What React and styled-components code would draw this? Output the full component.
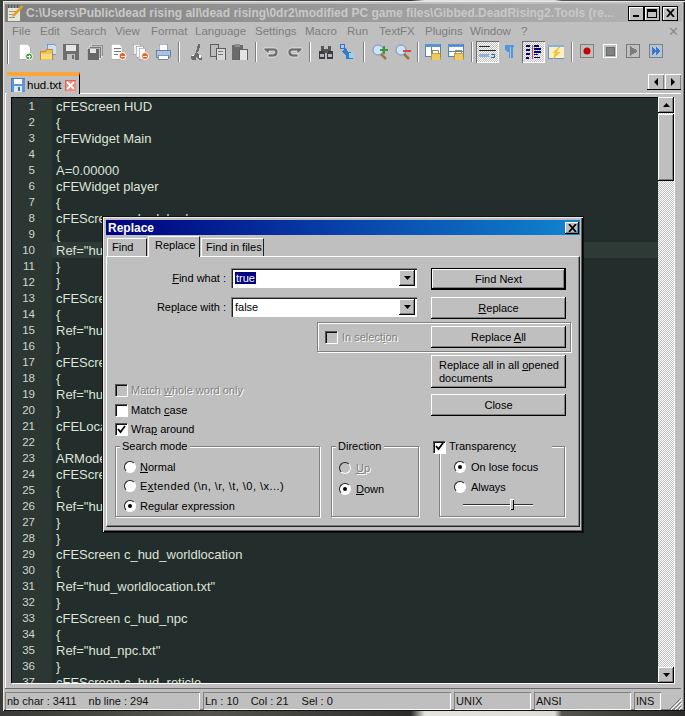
import React from "react";
import styled, { createGlobalStyle, css } from "styled-components";

const FACE = "#bfbfbf";
const UI_FONT = `"Liberation Sans", Arial, sans-serif`;

const GlobalStyle = createGlobalStyle`
  html, body { margin: 0; padding: 0; }
  body {
    width: 685px;
    height: 716px;
    overflow: hidden;
    background: linear-gradient(90deg, #3a3a36 0, #55554e 30%, #2c2c2a 60%, #e4e4dc 62%, #dcdcd4 81%, #55554e 82%, #2b2b28 100%);
    font-family: ${UI_FONT};
    font-size: 11px;
  }
`;

const raised = css`
  background: ${FACE};
  box-shadow: inset -1px -1px 0 #000, inset 1px 1px 0 #fff, inset -2px -2px 0 #808080;
`;

const sunken = css`
  box-shadow: inset 1px 1px 0 #808080, inset 2px 2px 0 #202020, inset -1px -1px 0 #fff;
`;

const Page = styled.div`
  position: relative;
  width: 685px;
  height: 716px;
  overflow: hidden;
`;

const Win = styled.div`
  margin-left: 3px;
  margin-top: 1px;
  width: 682px;
  height: 710px;
  box-sizing: border-box;
  padding: 3px 4px 1px 2px;
  background: ${FACE};
  box-shadow: inset 1px 1px 0 #e8e8e8, inset -1px -1px 0 #101010, inset -2px -2px 0 #808080;
  display: flex;
  flex-direction: column;
`;

const TitleBar = styled.div`
  height: 18px;
  flex: none;
  display: flex;
  align-items: center;
  padding-left: 2px;
  margin-right: -1px;
  background: linear-gradient(90deg, #808080, #b4b4b4);
`;

const TitleText = styled.span`
  margin-left: 3px;
  width: 599px;
  flex: none;
  white-space: nowrap;
  overflow: hidden;
  font: bold 12px ${UI_FONT};
  color: #c8c8c8;
`;

const WinButtons = styled.div`
  display: flex;
  margin-left: 3px;
`;

const WinButton = styled.div`
  ${raised}
  width: 16px;
  height: 15px;
  margin-left: ${(p) => p.$gap || 0}px;
  display: flex;
  align-items: center;
  justify-content: center;
  box-shadow: inset 0 0 0 1px #000, inset 2px 2px 0 #fff;
`;

const MenuBar = styled.div`
  height: 18px;
  flex: none;
  display: flex;
  align-items: center;
  padding-left: 7px;
`;

const MenuItem = styled.span`
  width: ${(p) => p.$w}px;
  flex: none;
  color: #7d7d7d;
  font-size: 11.5px;
`;

const MenuClose = styled.span`
  margin-left: auto;
  margin-right: 2px;
  color: #8a8a8a;
  font-size: 13px;
`;

const ToolBar = styled.div`
  height: 24px;
  flex: none;
  display: flex;
  align-items: center;
  padding-left: 1px;
`;

const Grip = styled.div`
  width: 1px;
  height: 24px;
  flex: none;
  margin-left: 1px;
  margin-right: 9px;
  background: #6f6f6f;
  box-shadow: 1px 0 0 #fff;
`;

const ToolSep = styled.div`
  width: 1px;
  height: 20px;
  flex: none;
  margin: 0 ${(p) => p.$r ?? 7}px 0 ${(p) => p.$l ?? 7}px;
  background: #fff;
  box-shadow: -1px 0 0 #7f7f7f;
`;

const ToolIcon = styled.div`
  width: ${(p) => p.$w ?? 16}px;
  height: 16px;
  flex: none;
  margin-right: ${(p) => p.$gap ?? 7}px;
  svg { display: block; }
`;

const ActiveTool = styled.div`
  width: 23px;
  height: 22px;
  flex: none;
  margin-right: ${(p) => p.$gap ?? 6}px;
  display: flex;
  align-items: center;
  justify-content: center;
  background: repeating-conic-gradient(#fff 0 25%, #bfbfbf 0 50%) 0 0 / 2px 2px;
  box-shadow: inset 1px 1px 0 #707070, inset -1px -1px 0 #fff;
`;

const TabStrip = styled.div`
  height: 29px;
  flex: none;
  box-sizing: content-box;
  display: flex;
  align-items: flex-end;
  padding-left: 2px;
  border-bottom: 1px solid #fff;
  margin-bottom: -1px;
`;

const DocTab = styled.div`
  width: 73px;
  height: 22px;
  box-sizing: border-box;
  border-top: 4px solid #fba63a;
  border-right: 1px solid #000;
  background: ${FACE};
  display: flex;
  align-items: center;
  padding-left: 4px;
  margin-bottom: -1px;
  font-size: 11.5px;
  color: #000;
  position: relative;
`;

const DocName = styled.span`
  margin-left: 2px;
  width: 38px;
  flex: none;
`;

const TabArrows = styled.div`
  margin-left: auto;
  margin-right: 0;
  margin-bottom: 3px;
  display: flex;
  border-bottom: 1px solid #000;
`;

const ArrowBtn = styled.div`
  width: 16px;
  height: 15px;
  margin-left: 1px;
  display: flex;
  align-items: center;
  justify-content: center;
  background: ${FACE};
  box-shadow: inset 1px 1px 0 #fff, inset -1px 0 0 #808080;
`;

const EditorFrame = styled.div`
  flex: 1;
  min-height: 0;
  padding: 4px 7px 5px 6px;
  border-bottom: 1px solid #6a6a6a;
  box-shadow: inset 1px 0 0 #fff;
  display: flex;
`;

const EditorInner = styled.div`
  flex: 1;
  min-width: 0;
  display: flex;
  box-shadow: 1px 1px 0 #fff;
`;

const Editor = styled.div`
  flex: 1;
  min-width: 0;
  background: #232d2b;
  overflow: hidden;
  box-shadow: inset 1px 1px 0 #000;
  padding: 1px 0 0 1px;
`;

const Line = styled.div`
  height: 16px;
  display: flex;
  align-items: center;
  background: ${(p) => (p.$current ? "#2d3a36" : "transparent")};
`;

const LineNumber = styled.div`
  width: 40px;
  height: 16px;
  flex: none;
  box-sizing: border-box;
  padding-right: 17px;
  text-align: right;
  line-height: 16px;
  font-size: 11.5px;
  color: #d0d6cc;
  background: #2c3633;
`;

const LineText = styled.div`
  margin-left: 4px;
  font-size: 13px;
  color: #dde3d8;
  white-space: pre;
`;

const ScrollBar = styled.div`
  width: 16px;
  flex: none;
  display: flex;
  flex-direction: column;
  background: repeating-conic-gradient(#fff 0 25%, #bfbfbf 0 50%) 0 0 / 2px 2px;
`;

const ScrollBtn = styled.div`
  ${raised}
  height: 16px;
  flex: none;
  display: flex;
  align-items: center;
  justify-content: center;
`;

const ScrollThumb = styled.div`
  ${raised}
  height: 67px;
  flex: none;
  margin-top: 1px;
`;

const ScrollFill = styled.div`
  flex: 1;
`;

const StatusBar = styled.div`
  height: 18px;
  flex: none;
  display: flex;
  margin-top: 3px;
  gap: 3px;
`;

const StatusCell = styled.div`
  width: ${(p) => p.$w}px;
  flex: none;
  box-sizing: border-box;
  box-shadow: inset 1px 1px 0 #808080, inset -1px -1px 0 #fff;
  display: flex;
  align-items: center;
  padding-left: 2px;
  font-size: 11px;
  color: #111;
  white-space: pre;
`;

const StatusPart = styled.span`
  margin-right: ${(p) => p.$gap}px;
`;

const ResizeGrip = styled.div`
  margin-left: 4px;
  width: 15px;
  align-self: flex-end;
  svg { display: block; }
`;

/* Replace dialog, floats over the editor */
const Dialog = styled.div`
  position: absolute;
  left: 103px;
  top: 217px;
  width: 480px;
  height: 315px;
  box-sizing: border-box;
  padding: 3px 3px 5px;
  background: ${FACE};
  box-shadow: inset 1px 1px 0 #e8e8e8, inset -1px -1px 0 #000, inset -2px -2px 0 #606060, 0 0 0 1px #111;
  color: #000;
  display: flex;
  flex-direction: column;
`;

const DialogTitle = styled.div`
  height: 15px;
  flex: none;
  display: flex;
  align-items: center;
  justify-content: space-between;
  padding: 0 1px 0 2px;
  background: linear-gradient(90deg, #000080, #1084d0);
  color: #fff;
  font: bold 12px ${UI_FONT};
`;

const DialogClose = styled.div`
  ${raised}
  width: 14px;
  height: 12px;
  display: flex;
  align-items: center;
  justify-content: center;
`;

const Tabs = styled.div`
  height: 20px;
  margin-top: 1px;
  flex: none;
  display: flex;
  align-items: flex-end;
  padding-left: 1px;
  gap: 1px;
`;

const Tab = styled.div`
  width: ${(p) => p.$w}px;
  height: ${(p) => (p.$active ? 21 : 18)}px;
  box-sizing: border-box;
  background: ${FACE};
  border-top: 1px solid #fff;
  border-left: 1px solid #fff;
  border-right: 1px solid #202020;
  padding: ${(p) => (p.$active ? "2px 0 0 6px" : "2px 0 0 4px")};
  font-size: 11px;
  margin-bottom: ${(p) => (p.$active ? -1 : 0)}px;
  position: relative;
  z-index: ${(p) => (p.$active ? 1 : 0)};
`;

const TabPanel = styled.div`
  flex: 1;
  box-sizing: border-box;
  border-top: 1px solid #fff;
  border-left: 1px solid #fff;
  border-right: 1px solid #202020;
  border-bottom: 1px solid #202020;
  box-shadow: inset -1px -1px 0 #808080;
  padding-top: 11px;
  display: flex;
  flex-direction: column;
`;

const FieldRow = styled.div`
  display: grid;
  grid-template-columns: 119px 205px 135px;
  margin-bottom: 7px;
  align-items: start;
`;

const FieldLabel = styled.label`
  text-align: right;
  line-height: 20px;
  font-size: 11px;
`;

const Combo = styled.div`
  ${sunken}
  width: 186px;
  height: 20px;
  margin-left: 5px;
  box-sizing: border-box;
  background: #fff;
  display: flex;
  align-items: center;
  justify-content: space-between;
  padding: 2px 2px 2px 4px;
  font-size: 11px;
`;

const Selected = styled.span`
  background: #000080;
  color: #fff;
  padding: 0 1px;
`;

const ComboArrow = styled.div`
  ${raised}
  width: 16px;
  height: 16px;
  display: flex;
  align-items: center;
  justify-content: center;
`;

const Button = styled.div`
  ${raised}
  width: 135px;
  height: ${(p) => p.$h || 22}px;
  box-sizing: border-box;
  flex: none;
  display: flex;
  align-items: center;
  justify-content: center;
  font-size: 11px;
  line-height: 13px;
  ${(p) =>
    p.$default &&
    css`
      box-shadow: inset 0 0 0 1px #000, inset -2px -2px 0 #000, inset 2px 2px 0 #fff, inset -3px -3px 0 #808080;
    `}
  ${(p) =>
    p.$wrap &&
    css`
      justify-content: flex-start;
      padding-left: 8px;
    `}
`;

const SelectionBox = styled.div`
  width: 254px;
  height: 30px;
  margin: -4px 0 3px 210px;
  box-sizing: border-box;
  border: 1px solid #808080;
  box-shadow: 1px 1px 0 #fff, inset 1px 1px 0 #fff;
  display: flex;
  align-items: center;
  padding-left: 7px;
  justify-content: space-between;
  padding-right: 4px;
`;

const LowerBlock = styled.div`
  display: flex;
  justify-content: space-between;
  height: 84px;
  padding-left: 8px;
  padding-right: 13px;
`;

const CheckColumn = styled.div`
  display: flex;
  flex-direction: column;
  justify-content: flex-end;
`;

const ButtonColumn = styled.div`
  display: flex;
  flex-direction: column;
  gap: 6px;
`;

const OptionRow = styled.div`
  display: flex;
  align-items: center;
  height: ${(p) => p.$h || 19.5}px;
  gap: ${(p) => p.$gap ?? 4}px;
  font-size: 11px;
  white-space: nowrap;
  color: ${(p) => (p.$off ? "#808080" : "#000")};
  text-shadow: ${(p) => (p.$off ? "1px 1px 0 #fff" : "none")};
`;

const WideLabel = styled.span`
  letter-spacing: 0.45px;
`;

const Check = styled.span`
  width: 12px;
  height: 12px;
  flex: none;
  background: ${(p) => (p.$off ? FACE : "#fff")};
  box-shadow: inset 1px 1px 0 #555, inset 2px 2px 0 #101010, 1px 1px 0 #fff;
  display: flex;
  align-items: center;
  justify-content: center;
  text-shadow: none;
`;

const Radio = styled.span`
  width: 12px;
  height: 12px;
  flex: none;
  border-radius: 50%;
  box-sizing: border-box;
  background: ${(p) => (p.$off ? FACE : "#fff")};
  border: 1px solid;
  border-color: #202020 #fff #fff #202020;
  display: flex;
  align-items: center;
  justify-content: center;
  &::after {
    content: "";
    display: ${(p) => (p.$on ? "block" : "none")};
    width: 4px;
    height: 4px;
    border-radius: 50%;
    background: #000;
  }
`;

const GroupRow = styled.div`
  display: flex;
  margin-top: 1px;
  margin-left: 8px;
`;

const Group = styled.fieldset`
  width: ${(p) => p.$w}px;
  height: 77px;
  flex: none;
  box-sizing: border-box;
  margin: 0 0 0 ${(p) => p.$left || 0}px;
  padding: 4px 0 0 ${(p) => p.$pad}px;
  min-width: 0;
  border: 1px solid #808080;
  box-shadow: 1px 1px 0 #fff, inset 1px 1px 0 #fff;
`;

const Legend = styled.legend`
  padding: 0 3px 0 2px;
  margin-left: ${(p) => 4 - p.$pad}px;
  font-size: 11px;
  line-height: 13px;
  background: ${FACE};
  position: relative;
`;

const CheckLegend = styled.legend`
  display: flex;
  align-items: center;
  gap: 4px;
  width: 119px;
  margin-left: ${(p) => -7 - p.$pad}px;
  padding: 0;
  font-size: 11px;
  line-height: 13px;
  background: ${FACE};
  position: relative;
`;

const Slider = styled.div`
  width: 70px;
  height: 12px;
  margin: 2px 0 0 9px;
  position: relative;
  &::before {
    content: "";
    position: absolute;
    left: 0;
    right: 0;
    top: 5px;
    height: 1px;
    background: #303030;
    box-shadow: 0 1px 0 #fff;
  }
`;

const SliderThumb = styled.div`
  position: absolute;
  left: 47px;
  top: 0;
  width: 4px;
  height: 11px;
  background: ${FACE};
  box-shadow: inset 1px 1px 0 #fff, inset -1px -1px 0 #000;
`;

/* ---- icons ---- */
const Svg = ({ children, w = 16, h = 16 }) => (
  <svg width={w} height={h} viewBox={`0 0 ${w} ${h}`} shapeRendering="crispEdges">
    {children}
  </svg>
);

const Page16 = ({ x = 2 }) => (
  <path d={`M${x} 0h8l3 3v12h-11z`} fill="#fff" stroke="#a8a8a8" strokeWidth=".6" />
);

const NewIcon = () => (
  <Svg>
    <Page16 />
    <circle cx="12" cy="12.5" r="3.5" fill="#3f9d3f" stroke="#fff" shapeRendering="auto" />
    <path d="M10 12h4v1h-4zM11.500 10.500h1v4h-1z" fill="#fff" />
  </Svg>
);

const OpenIcon = () => (
  <Svg>
    <path d="M7 0h7l2 2v8H7z" fill="#cfe0f4" stroke="#4f7fc0" strokeWidth=".7" />
    <path d="M0 7h6l1-2h5v11H0z" fill="#f4c04e" stroke="#a87a20" strokeWidth=".7" />
    <path d="M1 10h11v5H1z" fill="#fbdc80" />
  </Svg>
);

const SaveIcon = ({ color = "#6e6e6e", face = "#e6e6e6" }) => (
  <Svg>
    <path d="M0 0h15l1 1v15H0z" fill={color} />
    <path d="M3 1h10v6H3z" fill={face} />
    <path d="M4 10h8v6H4z" fill={FACE} />
    <path d="M9 11h2v4H9z" fill={color} />
  </Svg>
);

const SaveAllIcon = () => (
  <Svg>
    <path d="M4 0h12v12H4z" fill="#8d8d8d" stroke="#fff" strokeWidth=".5" />
    <path d="M2 2h12v12H2z" fill="#7a7a7a" stroke="#fff" strokeWidth=".5" />
    <path d="M0 4h12v12H0z" fill="#666" stroke="#fff" strokeWidth=".5" />
    <path d="M3 5h6v4H3z" fill="#e4e4e4" />
  </Svg>
);

const CloseDocIcon = () => (
  <Svg>
    <Page16 x={0} />
    <path d="M3 4h7v1H3zM3 7h7v1H3zM3 10h4v1H3z" fill="#777" />
    <circle cx="11.500" cy="12" r="3.500" fill="#e8612a" stroke="#fff" shapeRendering="auto" />
    <path d="M9.500 11.500h4v1h-4z" fill="#fff" />
  </Svg>
);

const CloseAllIcon = () => (
  <Svg>
    <path d="M0 0h7v10H0z" fill="#eee" stroke="#999" strokeWidth=".6" />
    <path d="M3 2h7v11H3z" fill="#f8f8f8" stroke="#999" strokeWidth=".6" />
    <path d="M6 4h6v11H6z" fill="#fff" stroke="#999" strokeWidth=".6" />
    <circle cx="12" cy="12" r="3.500" fill="#e8612a" stroke="#fff" shapeRendering="auto" />
    <path d="M10 11.500h4v1h-4z" fill="#fff" />
  </Svg>
);

const PrintIcon = () => (
  <Svg>
    <path d="M4 0h8v6H4z" fill="#fff" stroke="#7f95b5" strokeWidth=".7" />
    <path d="M1 6h14v7H1z" fill="#a9c3e4" stroke="#56719a" strokeWidth=".8" />
    <path d="M3 11h10v4H3z" fill="#fff" stroke="#56719a" strokeWidth=".7" />
  </Svg>
);

const CutIcon = () => (
  <Svg>
    <path d="M10 0h2v3l-2 5H8zM5 16h3v-3l3 3h3v-3l-3-2-2-3H8l-1 3-2 1H3v3z" fill="#6a6a6a" />
    <path d="M3 11h3v1H4zM11 11h2v3h-2z" fill="#fff" />
  </Svg>
);

const CopyIcon = () => (
  <Svg>
    <path d="M0 0h8v12H0z" fill="#bcbcbc" stroke="#5e5e5e" />
    <path d="M6 4h9v12H6z" fill="#d8d8d8" stroke="#5e5e5e" />
    <path d="M8 7h5v1H8zM8 10h5v1H8z" fill="#777" />
  </Svg>
);

const PasteIcon = () => (
  <Svg>
    <path d="M0 1h11v15H0z" fill="#6b6b6b" />
    <path d="M3 0h5v3H3z" fill="#8d8d8d" />
    <path d="M7 5h8v11H7z" fill="#e2e2e2" stroke="#5e5e5e" />
  </Svg>
);

const UndoIcon = ({ flip }) => (
  <Svg>
    <g transform={flip ? "matrix(-1 0 0 1 16 0)" : undefined}>
      <path
        d="M1 4h9c4 0 5 2 5 4s-1 5-5 5H5v-3h5c1 0 2-1 2-2s-1-1-2-1H6v3L1 6z"
        fill="#6c6c6c"
        stroke="#fff"
        strokeWidth=".6"
        shapeRendering="auto"
      />
    </g>
  </Svg>
);

const FindIcon = () => (
  <Svg>
    <path d="M1 7h6v8H1zM9 7h6v8H9z" fill="#3b3b3b" />
    <path d="M3 2h3v5H3zM10 2h3v5h-3zM6 5h4v4H6z" fill="#555" />
    <path d="M2 10h4v3H2zM10 10h4v3h-4z" fill="#b0b8c8" />
  </Svg>
);

const ReplaceIcon = () => (
  <Svg>
    <path d="M0 0h5v5H0z" fill="#3f6fc0" />
    <path d="M2 7l4-3 2 4 5 1v6H6v-3z" fill="#2f7fc8" />
    <path d="M9 9h5v5H9z" fill="#9ad0f0" />
    <path d="M1 1h3v3H1z" fill="#a6cdf0" />
  </Svg>
);

const ZoomIcon = ({ plus }) => (
  <Svg>
    <circle cx="6" cy="6" r="5" fill="#cfe3f7" stroke="#6d94c4" shapeRendering="auto" />
    <path d="M9 10l5 5" stroke="#9a7440" strokeWidth="2.500" shapeRendering="auto" />
    <path d={plus ? "M8 5h3V2h2v3h3v2h-3v3h-2V7H8z" : "M8 6h8v2H8z"} fill={plus ? "#3c9a3c" : "#d8484c"} />
  </Svg>
);

const LockIcon = ({ vertical }) => (
  <Svg>
    <path d="M0 0h15v12H0z" fill="#fff" stroke="#4d82c4" />
    <path d="M0 0h15v3H0z" fill="#5a90d4" />
    {vertical ? <path d="M6 3h1v9H6z" fill="#4d82c4" /> : <path d="M0 7h15v1H0z" fill="#4d82c4" />}
    <path d="M7 6h6v3H7z" fill="none" stroke="#9a8a50" />
    <path d="M6 9h9v7H6z" fill="#f0c860" stroke="#b08a30" strokeWidth=".7" />
  </Svg>
);

const WrapIcon = () => (
  <Svg w={17} h={14}>
    <path d="M0 1h11v1H0zM0 5h17v1H0z" fill="#222" />
    <path d="M0 9h10v3H0z" fill="#8db2e0" />
    <path d="M12 9h4v1h-4zM15 9h1v4h-4v-1h3z" fill="#3567b0" />
  </Svg>
);

const PilcrowIcon = () => (
  <Svg w={9} h={14}>
    <path d="M0 1h9v2H7.500v11H6V3H5v11H3.500V8C1 8 0 6 0 4z" fill="#4e9ae0" />
  </Svg>
);

const IndentIcon = () => (
  <Svg w={15} h={16}>
    <path d="M6 1h1v14H6z" fill="#d03030" opacity=".8" />
    <path d="M0 1h4v2H0zM0 5h4v2H0zM0 9h4v2H0zM0 13h3v2H0z" fill="#000080" />
    <path d="M8 1h5v2H8zM8 4h7v2H8zM8 7h7v2H8zM8 10h4v1H8zM8 13h6v1H8z" fill="#000080" />
  </Svg>
);

const FlashIcon = () => (
  <Svg>
    <path d="M0 1h16v13H0z" fill="#fdf0c0" stroke="#5c94d8" />
    <path d="M0 1h16v2H0z" fill="#7fb0e8" />
    <path d="M10 3L4 9h3l-2 6 7-7H9l3-5z" fill="#f2c53c" />
  </Svg>
);

const RecIcon = () => (
  <Svg w={14} h={14}>
    <path d="M.5.500h13v13H.5z" fill={FACE} stroke="#808080" />
    <circle cx="7" cy="7" r="3.500" fill="#c40000" shapeRendering="auto" />
  </Svg>
);

const StopIcon = () => (
  <Svg w={14} h={14}>
    <path d="M.5.500h13v13H.5z" fill={FACE} stroke="#fff" />
    <path d="M3 3h8v8H3z" fill="#808080" stroke="#6a6a6a" />
  </Svg>
);

const PlayIcon = () => (
  <Svg w={14} h={14}>
    <path d="M.5.500h13v13H.5z" fill={FACE} stroke="#777" />
    <path d="M4 2v10l8-5z" fill="#7c7c7c" />
  </Svg>
);

const PlayManyIcon = () => (
  <Svg w={14} h={14}>
    <path d="M.5.500h13v13H.5z" fill="#b6c4d8" stroke="#808080" />
    <path d="M3 3v8l4-4zM7 3v8l4-4z" fill="#3a78d0" />
  </Svg>
);

const TitleIcon = () => (
  <Svg>
    <path d="M0 2h13v14H0z" fill="#e6e6d6" stroke="#8a8a7a" />
    <path d="M1 0h1v3H1zM4 0h1v3H4zM7 0h1v3H7zM10 0h1v3h-1z" fill="#555" />
    <path d="M2 6h9v1H2zM2 9h7v1H2zM2 12h6v1H2z" fill="#9a9a90" />
    <path d="M15 0l1 2-8 9-3 1 1-3z" fill="#e8a020" shapeRendering="auto" />
  </Svg>
);

const DocSaveIcon = () => (
  <Svg w={14} h={14}>
    <path d="M0 0h13l1 1v13H0z" fill="#5d97d8" stroke="#3d6cb0" strokeWidth=".6" />
    <path d="M3 1h8v5H3z" fill="#fff" />
    <path d="M3 8h8v6H3z" fill="#dce9f8" />
    <path d="M7 9h2v4H7z" fill="#3d6cb0" />
  </Svg>
);

const DocCloseIcon = () => (
  <Svg w={11} h={11}>
    <path d="M0 0h11v11H0z" fill="#ee8a80" stroke="#c8503c" strokeWidth=".6" />
    <path d="M2 2l7 7M9 2l-7 7" stroke="#fff" strokeWidth="1.800" shapeRendering="auto" />
  </Svg>
);

const Cross = ({ size = 9 }) => (
  <Svg w={size} h={size - 1}>
    <path d={`M1 0l${size - 2} ${size - 1}M${size - 1} 0L1 ${size - 1}`} stroke="#000" strokeWidth="1.800" shapeRendering="auto" />
  </Svg>
);

const Triangle = ({ dir = "down" }) => {
  const paths = {
    down: "M0 0h7L3.500 4z",
    up: "M0 4h7L3.500 0z",
    left: "M4 0v8L0 4z",
    right: "M0 0v8l4-4z"
  };
  const vertical = dir === "down" || dir === "up";
  return (
    <svg width={vertical ? 7 : 4} height={vertical ? 4 : 8} viewBox={vertical ? "0 0 7 4" : "0 0 4 8"}>
      <path d={paths[dir]} fill="#000" />
    </svg>
  );
};

const Tick = () => (
  <svg width="9" height="9" viewBox="0 0 9 9">
    <path d="M1 4l2.500 3L8 1" fill="none" stroke="#000" strokeWidth="1.800" />
  </svg>
);

/* ---- data ---- */
const MENUS = [
  ["File", 28],
  ["Edit", 30],
  ["Search", 45],
  ["View", 36],
  ["Format", 44],
  ["Language", 60],
  ["Settings", 50],
  ["Macro", 42],
  ["Run", 32],
  ["TextFX", 46],
  ["Plugins", 45],
  ["Window", 51],
  ["?", 20]
];

const LINES = [
  "cFEScreen HUD",
  "{",
  "cFEWidget Main",
  "{",
  "A=0.00000",
  "cFEWidget player",
  "{",
  "cFEScreen c_hud_hud",
  "{",
  'Ref="hud_hud.txt"',
  "}",
  "}",
  "cFEScreen c_hud_map",
  "{",
  'Ref="hud_map.txt"',
  "}",
  "cFEScreen c_hud_ammo",
  "{",
  'Ref="hud_ammo.txt"',
  "}",
  "cFELocation",
  "{",
  "ARMode",
  "cFEScreen c_hud_ar",
  "{",
  'Ref="hud_ar.txt"',
  "}",
  "}",
  "cFEScreen c_hud_worldlocation",
  "{",
  'Ref="hud_worldlocation.txt"',
  "}",
  "cFEScreen c_hud_npc",
  "{",
  'Ref="hud_npc.txt"',
  "}",
  "cFEScreen c_hud_reticle"
];

const App = () => (
  <Page>
    <GlobalStyle />
    <Win>
      <TitleBar>
        <TitleIcon />
        <TitleText>
          C:\Users\Public\dead rising all\dead rising\0dr2\modified PC game files\Gibbed.DeadRising2.Tools (re...
        </TitleText>
        <WinButtons>
          <WinButton>
            <Svg w={8} h={8}>
              <path d="M1 6h6v2H1z" fill="#000" />
            </Svg>
          </WinButton>
          <WinButton>
            <Svg w={10} h={9}>
              <path d="M.5 1.500h9v7h-9zM0 0h10v2H0z" fill="none" stroke="#000" />
            </Svg>
          </WinButton>
          <WinButton $gap={2}>
            <Cross />
          </WinButton>
        </WinButtons>
      </TitleBar>

      <MenuBar>
        {MENUS.map(([name, w]) => (
          <MenuItem key={name} $w={w}>
            {name}
          </MenuItem>
        ))}
        <MenuClose>✕</MenuClose>
      </MenuBar>

      <ToolBar>
        <Grip />
        <ToolIcon $gap={7}><NewIcon /></ToolIcon>
        <ToolIcon $gap={7}><OpenIcon /></ToolIcon>
        <ToolIcon $gap={8}><SaveIcon /></ToolIcon>
        <ToolIcon $gap={8}><SaveAllIcon /></ToolIcon>
        <ToolIcon $gap={6}><CloseDocIcon /></ToolIcon>
        <ToolIcon $gap={6}><CloseAllIcon /></ToolIcon>
        <ToolIcon $gap={0}><PrintIcon /></ToolIcon>
        <ToolSep $l={8} $r={8} />
        <ToolIcon $gap={6}><CutIcon /></ToolIcon>
        <ToolIcon $gap={6}><CopyIcon /></ToolIcon>
        <ToolIcon $gap={0}><PasteIcon /></ToolIcon>
        <ToolSep $l={8} $r={6} />
        <ToolIcon $gap={8}><UndoIcon /></ToolIcon>
        <ToolIcon $gap={0}><UndoIcon flip /></ToolIcon>
        <ToolSep $l={7} $r={7} />
        <ToolIcon $gap={6}><FindIcon /></ToolIcon>
        <ToolIcon $gap={0}><ReplaceIcon /></ToolIcon>
        <ToolSep $l={8} $r={7} />
        <ToolIcon $gap={7}><ZoomIcon plus /></ToolIcon>
        <ToolIcon $gap={0}><ZoomIcon /></ToolIcon>
        <ToolSep $l={7} $r={6} />
        <ToolIcon $gap={7}><LockIcon vertical /></ToolIcon>
        <ToolIcon $gap={0}><LockIcon /></ToolIcon>
        <ToolSep $l={8} $r={3} />
        <ActiveTool><WrapIcon /></ActiveTool>
        <ToolIcon $w={10} $gap={7}><PilcrowIcon /></ToolIcon>
        <ActiveTool $gap={3}><IndentIcon /></ActiveTool>
        <ToolIcon $gap={0}><FlashIcon /></ToolIcon>
        <ToolSep $l={8} $r={7} />
        <ToolIcon $gap={7}><RecIcon /></ToolIcon>
        <ToolIcon $gap={7}><StopIcon /></ToolIcon>
        <ToolIcon $gap={7}><PlayIcon /></ToolIcon>
        <ToolIcon $gap={0}><PlayManyIcon /></ToolIcon>
      </ToolBar>

      <TabStrip>
        <DocTab>
          <DocSaveIcon />
          <DocName>hud.txt</DocName>
          <DocCloseIcon />
        </DocTab>
        <TabArrows>
          <ArrowBtn><Triangle dir="left" /></ArrowBtn>
          <ArrowBtn><Triangle dir="right" /></ArrowBtn>
        </TabArrows>
      </TabStrip>

      <EditorFrame>
        <EditorInner>
          <Editor>
            {LINES.map((text, i) => (
              <Line key={i} $current={i === 9}>
                <LineNumber>{i + 1}</LineNumber>
                <LineText>{text}</LineText>
              </Line>
            ))}
          </Editor>
          <ScrollBar>
            <ScrollBtn><Triangle dir="up" /></ScrollBtn>
            <ScrollThumb />
            <ScrollFill />
            <ScrollBtn><Triangle dir="down" /></ScrollBtn>
          </ScrollBar>
        </EditorInner>
      </EditorFrame>

      <StatusBar>
        <StatusCell $w={195}>
          <StatusPart $gap={12}>nb char : 3411</StatusPart>
          <StatusPart>nb line : 294</StatusPart>
        </StatusCell>
        <StatusCell $w={248}>
          <StatusPart $gap={12}>Ln : 10</StatusPart>
          <StatusPart $gap={13}>Col : 21</StatusPart>
          <StatusPart>Sel : 0</StatusPart>
        </StatusCell>
        <StatusCell $w={77}>UNIX</StatusCell>
        <StatusCell $w={97}>ANSI</StatusCell>
        <StatusCell $w={27}>INS</StatusCell>
        <ResizeGrip>
          <Svg w={14} h={14}>
            <path d="M13 2L2 13M13 6L6 13M13 10l-3 3" stroke="#7a7a7a" strokeWidth="1" shapeRendering="auto" />
            <path d="M14 3L3 14M14 7L7 14M14 11l-3 3" stroke="#fff" strokeWidth="1" shapeRendering="auto" />
          </Svg>
        </ResizeGrip>
      </StatusBar>
    </Win>

    <Dialog>
      <DialogTitle>
        Replace
        <DialogClose><Cross /></DialogClose>
      </DialogTitle>
      <Tabs>
        <Tab $w={40}>Find</Tab>
        <Tab $w={52} $active>Replace</Tab>
        <Tab $w={63}>Find in files</Tab>
      </Tabs>
      <TabPanel>
        <FieldRow>
          <FieldLabel><u>F</u>ind what :</FieldLabel>
          <Combo>
            <Selected>true</Selected>
            <ComboArrow><Triangle /></ComboArrow>
          </Combo>
          <Button $default>Find Next</Button>
        </FieldRow>
        <FieldRow>
          <FieldLabel>Rep<u>l</u>ace with :</FieldLabel>
          <Combo>
            false
            <ComboArrow><Triangle /></ComboArrow>
          </Combo>
          <Button><span><u>R</u>eplace</span></Button>
        </FieldRow>
        <SelectionBox>
          <OptionRow $off $gap={5}>
            <Check $off />
            <span>In select<u>i</u>on</span>
          </OptionRow>
          <Button><span>Replace <u>A</u>ll</span></Button>
        </SelectionBox>
        <LowerBlock>
          <CheckColumn>
            <OptionRow $off>
              <Check $off />
              <span>Match <u>w</u>hole word only</span>
            </OptionRow>
            <OptionRow>
              <Check />
              <span>Match <u>c</u>ase</span>
            </OptionRow>
            <OptionRow>
              <Check><Tick /></Check>
              <span>Wra<u>p</u> around</span>
            </OptionRow>
          </CheckColumn>
          <ButtonColumn>
            <Button $h={33} $wrap>
              <span>Replace all in all <u>o</u>pened<br />documents</span>
            </Button>
            <Button>Close</Button>
          </ButtonColumn>
        </LowerBlock>
        <GroupRow>
          <Group $w={205} $pad={8}>
            <Legend $pad={8}>Search mode</Legend>
            <OptionRow>
              <Radio />
              <span><u>N</u>ormal</span>
            </OptionRow>
            <OptionRow>
              <Radio />
              <WideLabel>E<u>x</u>tended (\n, \r, \t, \0, \x...)</WideLabel>
            </OptionRow>
            <OptionRow>
              <Radio $on />
              <span>Re<u>g</u>ular expression</span>
            </OptionRow>
          </Group>
          <Group $w={88} $left={11} $pad={7}>
            <Legend $pad={7}>Direction</Legend>
            <OptionRow $off $h={21} $gap={5}>
              <Radio $off />
              <span><u>U</u>p</span>
            </OptionRow>
            <OptionRow $h={21} $gap={5}>
              <Radio $on />
              <span><u>D</u>own</span>
            </OptionRow>
          </Group>
          <Group $w={126} $left={20} $pad={14}>
            <CheckLegend $pad={14}>
              <Check><Tick /></Check>
              <span>Transparenc<u>y</u></span>
            </CheckLegend>
            <OptionRow $h={20} $gap={5}>
              <Radio $on />
              <span>On lose focus</span>
            </OptionRow>
            <OptionRow $h={20} $gap={5}>
              <Radio />
              <span>Always</span>
            </OptionRow>
            <Slider>
              <SliderThumb />
            </Slider>
          </Group>
        </GroupRow>
      </TabPanel>
    </Dialog>
  </Page>
);

export default App;
